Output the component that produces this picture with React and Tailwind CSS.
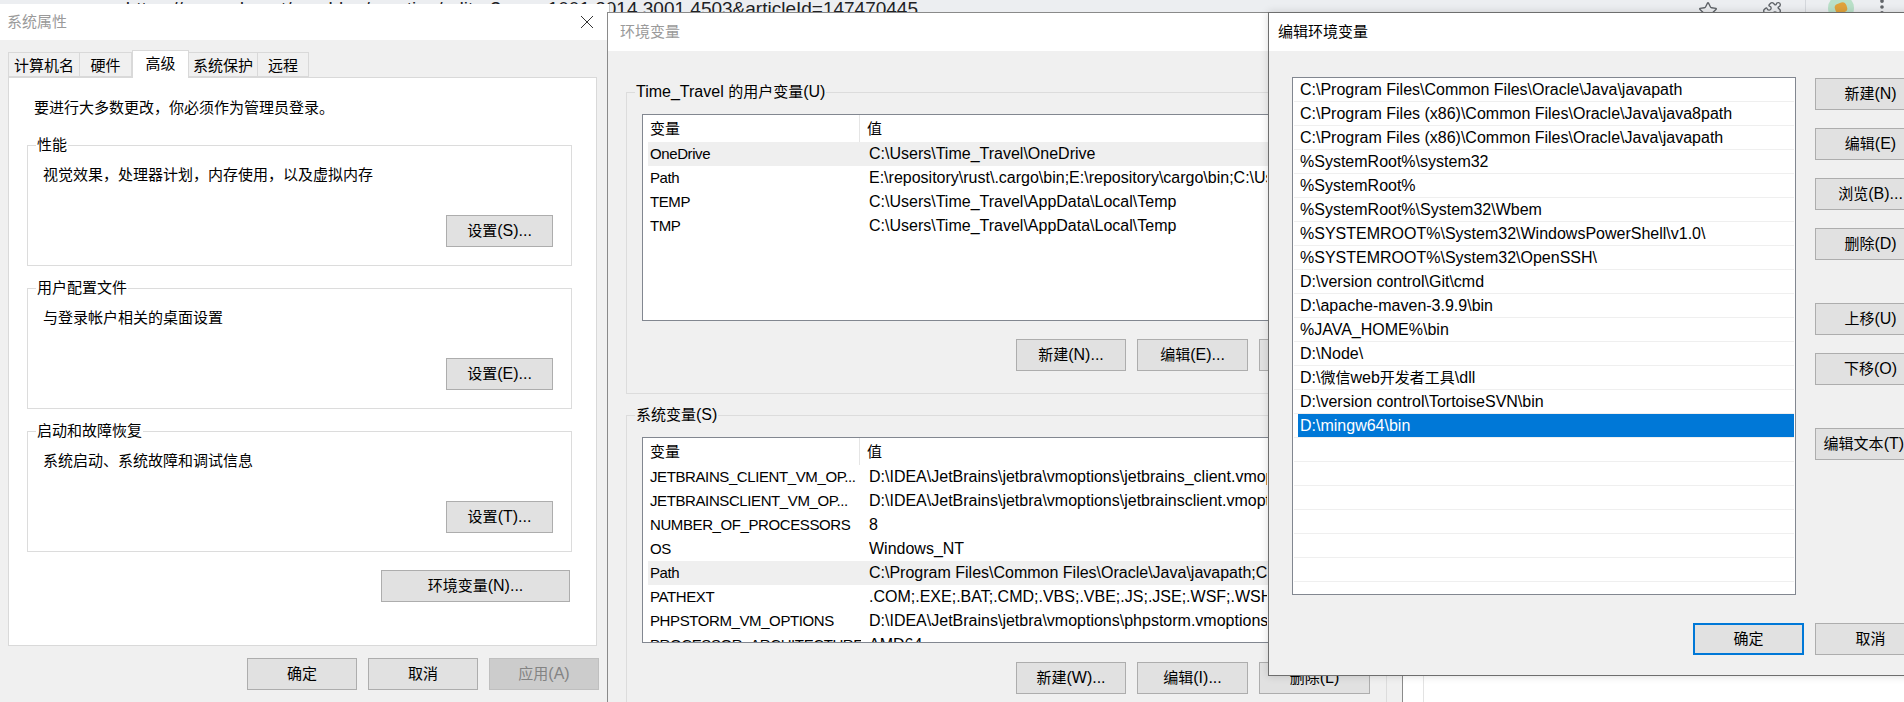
import { Star, Puzzle, EllipsisVertical } from "lucide-react";

const FONT = "font-['Liberation_Sans','Noto_Sans_CJK_SC',sans-serif]";

// YaHei draws latin letters a bit larger than its CJK glyphs, so latin runs get 16px
const CJK = /([\u2E80-\u9FFF\u3000-\u303F\uFF00-\uFFEF]+)/;
const tx = (s) =>
  s.split(CJK).map((part, i) =>
    i % 2 === 1 ? part : part ? <span key={i} className="text-[16px]">{part}</span> : null
  );

const Btn = ({ children, className = "", kind = "normal" }) => {
  const look =
    kind === "disabled"
      ? "border border-[#bfbfbf] bg-[#cccccc] text-[#838383]"
      : kind === "primary"
      ? "border-2 border-[#0078d7] bg-[#e1e1e1] text-black"
      : "border border-[#adadad] bg-[#e1e1e1] text-black";
  return (
    <div className={`shrink-0 flex items-center justify-center text-[15px] leading-[20px] whitespace-nowrap ${look} ${className}`}>
      <span>{tx(children)}</span>
    </div>
  );
};

const CloseX = () => (
  <svg width="14" height="14" viewBox="0 0 14 14" fill="none" stroke="#333" strokeWidth="1">
    <path d="M1 1 L13 13 M13 1 L1 13" />
  </svg>
);

const Group = ({ legend, className = "", children }) => (
  <div className={`relative shrink-0 border border-[#dcdcdc] ${className}`}>
    <span className="absolute -top-[11px] left-[8px] px-[1px] leading-[20px] bg-inherit whitespace-nowrap">{tx(legend)}</span>
    {children}
  </div>
);

const tabs = [
  { label: "计算机名", w: "w-[72px]" },
  { label: "硬件", w: "w-[53px]" },
  { label: "高级", w: "w-[57px]", active: true },
  { label: "系统保护", w: "w-[70px]" },
  { label: "远程", w: "w-[52px]" },
];

const SettingGroup = ({ legend, desc, btn }) => (
  <Group legend={legend} className="h-[121px] bg-white">
    <div className="pl-[15px] pt-[19px] leading-[20px]">{desc}</div>
    <div className="flex justify-end pr-[18px] mt-[30px]">
      <Btn className="w-[107px] h-[32px]">{btn}</Btn>
    </div>
  </Group>
);

const SystemProps = () => (
  <div className="absolute left-0 top-[4px] w-[610px] h-[720px] bg-[#f0f0f0] border-r border-[#c8c8c8] flex flex-col">
    <div className="h-[36px] shrink-0 bg-white flex items-center justify-between pl-[7px] pr-[15px]">
      <span className="text-[#9a9a9a]">系统属性</span>
      <CloseX />
    </div>
    <div className="pl-[8px] pt-[10px] flex flex-col">
      <div className="flex items-end h-[27px]">
        {tabs.map((t) =>
          t.active ? (
            <div
              key={t.label}
              className={`${t.w} h-[28px] -mb-px relative z-10 bg-white border border-b-0 border-[#d9d9d9] flex items-center justify-center pb-[2px]`}
            >
              {t.label}
            </div>
          ) : (
            <div
              key={t.label}
              className={`${t.w} h-[25px] border border-[#d9d9d9] -ml-px first:ml-0 flex items-center justify-center pt-[2px]`}
            >
              {t.label}
            </div>
          )
        )}
      </div>
      <div className="w-[589px] h-[569px] bg-white border border-[#d9d9d9] flex flex-col">
        <div className="pl-[25px] pt-[20px] leading-[20px]">要进行大多数更改，你必须作为管理员登录。</div>
        <div className="ml-[18px] mt-[27px] w-[545px] flex flex-col gap-[22px]">
          <SettingGroup legend="性能" desc="视觉效果，处理器计划，内存使用，以及虚拟内存" btn="设置(S)..." />
          <SettingGroup legend="用户配置文件" desc="与登录帐户相关的桌面设置" btn="设置(E)..." />
          <SettingGroup legend="启动和故障恢复" desc="系统启动、系统故障和调试信息" btn="设置(T)..." />
        </div>
        <div className="flex justify-end pr-[26px] mt-[18px]">
          <Btn className="w-[189px] h-[32px]">环境变量(N)...</Btn>
        </div>
      </div>
    </div>
    <div className="flex justify-end gap-[11px] pr-[10px] mt-[12px]">
      <Btn className="w-[110px] h-[32px]">确定</Btn>
      <Btn className="w-[110px] h-[32px]">取消</Btn>
      <Btn className="w-[110px] h-[32px]" kind="disabled">应用(A)</Btn>
    </div>
  </div>
);

const userVars = [
  ["OneDrive", "C:\\Users\\Time_Travel\\OneDrive", true],
  ["Path", "E:\\repository\\rust\\.cargo\\bin;E:\\repository\\cargo\\bin;C:\\Users\\Time_Travel\\AppData\\Local\\Microsoft\\WindowsApps"],
  ["TEMP", "C:\\Users\\Time_Travel\\AppData\\Local\\Temp"],
  ["TMP", "C:\\Users\\Time_Travel\\AppData\\Local\\Temp"],
];

const sysVars = [
  ["JETBRAINS_CLIENT_VM_OP...", "D:\\IDEA\\JetBrains\\jetbra\\vmoptions\\jetbrains_client.vmoptions"],
  ["JETBRAINSCLIENT_VM_OP...", "D:\\IDEA\\JetBrains\\jetbra\\vmoptions\\jetbrainsclient.vmoptions"],
  ["NUMBER_OF_PROCESSORS", "8"],
  ["OS", "Windows_NT"],
  ["Path", "C:\\Program Files\\Common Files\\Oracle\\Java\\javapath;C:\\Program Files (x86)\\Common Files", true],
  ["PATHEXT", ".COM;.EXE;.BAT;.CMD;.VBS;.VBE;.JS;.JSE;.WSF;.WSH;.MSC"],
  ["PHPSTORM_VM_OPTIONS", "D:\\IDEA\\JetBrains\\jetbra\\vmoptions\\phpstorm.vmoptions"],
  ["PROCESSOR_ARCHITECTURE", "AMD64"],
];

// the value column runs under the edit dialog, so it is cut where that window starts
const VarList = ({ rows, className = "" }) => (
  <div className={`w-[728px] bg-white border border-[#828790] overflow-hidden ${className}`}>
    <div className="flex h-[27px] items-center">
      <div className="w-[217px] h-full pl-[7px] flex items-center border-r border-[#e5e5e5]">变量</div>
      <div className="pl-[7px]">值</div>
    </div>
    {rows.map(([k, v, hl]) => (
      <div key={k} className={`flex h-[24px] items-center whitespace-nowrap ml-[5px] ${hl ? "bg-[#efefef]" : ""}`}>
        <div className="w-[213px] pl-[2px] shrink-0 overflow-hidden text-[15px] tracking-[-0.4px]">{k}</div>
        <div className="ml-[8px] w-[398px] overflow-hidden text-[16px]">{v}</div>
      </div>
    ))}
  </div>
);

const EnvVars = () => (
  <div className="absolute left-[607px] top-[12px] w-[796px] h-[700px] bg-[#f0f0f0] border border-[#8a8a8a] flex flex-col">
    <div className="h-[38px] shrink-0 bg-white flex items-center pl-[12px] text-[#9a9a9a]">环境变量</div>
    <div className="pl-[18px] flex flex-col">
      <Group legend="Time_Travel 的用户变量(U)" className="mt-[41px] w-[761px] h-[302px] bg-[#f0f0f0]">
        <div className="pl-[15px] pt-[21px]">
          <VarList rows={userVars} className="h-[207px]" />
          <div className="w-[728px] flex justify-end gap-[11px] mt-[18px]">
            <Btn className="w-[110px] h-[32px]">新建(N)...</Btn>
            <Btn className="w-[111px] h-[32px]">编辑(E)...</Btn>
            <Btn className="w-[111px] h-[32px]">删除(D)</Btn>
          </div>
        </div>
      </Group>
      <Group legend="系统变量(S)" className="mt-[21px] w-[761px] h-[320px] bg-[#f0f0f0]">
        <div className="pl-[15px] pt-[21px]">
          <VarList rows={sysVars} className="h-[206px]" />
          <div className="w-[728px] flex justify-end gap-[11px] mt-[19px]">
            <Btn className="w-[110px] h-[32px]">新建(W)...</Btn>
            <Btn className="w-[111px] h-[32px]">编辑(I)...</Btn>
            <Btn className="w-[111px] h-[32px]">删除(L)</Btn>
          </div>
        </div>
      </Group>
    </div>
  </div>
);

const pathItems = [
  "C:\\Program Files\\Common Files\\Oracle\\Java\\javapath",
  "C:\\Program Files (x86)\\Common Files\\Oracle\\Java\\java8path",
  "C:\\Program Files (x86)\\Common Files\\Oracle\\Java\\javapath",
  "%SystemRoot%\\system32",
  "%SystemRoot%",
  "%SystemRoot%\\System32\\Wbem",
  "%SYSTEMROOT%\\System32\\WindowsPowerShell\\v1.0\\",
  "%SYSTEMROOT%\\System32\\OpenSSH\\",
  "D:\\version control\\Git\\cmd",
  "D:\\apache-maven-3.9.9\\bin",
  "%JAVA_HOME%\\bin",
  "D:\\Node\\",
  "D:\\微信web开发者工具\\dll",
  "D:\\version control\\TortoiseSVN\\bin",
  "D:\\mingw64\\bin",
  "", "", "", "", "", "", "",
];

const sideButtons = [
  ["新建(N)", "mt-[1px]"],
  ["编辑(E)", "mt-[18px]"],
  ["浏览(B)...", "mt-[18px]"],
  ["删除(D)", "mt-[18px]"],
  ["上移(U)", "mt-[43px]"],
  ["下移(O)", "mt-[18px]"],
  ["编辑文本(T)...", "mt-[43px]"],
];

const EditEnv = () => (
  <div className="absolute left-[1268px] top-[12px] w-[700px] h-[664px] bg-[#f0f0f0] border border-[#6e6e6e] flex flex-col shadow-[0_0_8px_rgba(0,0,0,0.15)]">
    <div className="h-[38px] shrink-0 bg-white flex items-center pl-[9px] text-black">编辑环境变量</div>
    <div className="flex pl-[23px] pt-[26px]">
      <div className="w-[504px] h-[518px] shrink-0 bg-white border border-[#828790] overflow-hidden">
        {pathItems.map((p, i) => (
          <div key={i} className="h-[24px] mx-px border-b border-[#efefef] flex">
            <div
              className={`flex-1 flex items-center whitespace-nowrap ${i === 14 ? "ml-[4px] bg-[#0078d7] text-white pl-[2px]" : "pl-[6px]"}`}
            >
              <span>{tx(p)}</span>
            </div>
          </div>
        ))}
      </div>
      <div className="ml-[19px] flex flex-col">
        {sideButtons.map(([label, mt]) => (
          <Btn key={label} className={`w-[111px] h-[32px] ${mt}`}>{label}</Btn>
        ))}
      </div>
    </div>
    <div className="flex gap-[11px] pl-[424px] mt-[28px]">
      <Btn kind="primary" className="w-[111px] h-[32px]">确定</Btn>
      <Btn className="w-[111px] h-[32px]">取消</Btn>
    </div>
  </div>
);

const BrowserBar = () => (
  <div className="h-[40px] bg-[#eceef1] flex items-start overflow-hidden">
    <div className="w-[918px] shrink-0 flex justify-end overflow-hidden whitespace-nowrap -mt-[2px] text-[19px] leading-[22px] text-[#202124]">
      https://mp.csdn.net/mp_blog/creation/editor?spm=1001.2014.3001.4503&amp;articleId=147470445
    </div>
    <div className="flex-1" />
    <div className="flex items-start text-[#5f6368]">
      <Star size={20} strokeWidth={1.6} className="mt-[1px]" />
      <div className="w-[44px]" />
      <Puzzle size={20} strokeWidth={1.6} className="mt-[1px]" />
      <div className="w-[23px]" />
      <div className="w-px h-[12px] bg-[#d4d7dc]" />
      <div className="w-[22px]" />
      <div className="w-[26px] h-[26px] -mt-[5px] rounded-full bg-[#b9e0c8] flex items-center justify-center">
        <div className="w-[12px] h-[10px] rounded-sm bg-[#e0a23a] rotate-[-20deg]" />
      </div>
      <div className="w-[18px]" />
      <EllipsisVertical size={20} strokeWidth={2.4} className="-mt-[3px]" />
      <div className="w-[12px]" />
    </div>
  </div>
);

export default function App() {
  return (
    <div className={`relative w-[1904px] h-[702px] overflow-hidden bg-white text-[15px] leading-[20px] text-black ${FONT}`}>
      <BrowserBar />
      <div className="flex h-[662px]">
        <div className="w-[1423px] shrink-0" />
        <div className="border-l border-[#e3e3e3]" />
      </div>
      <SystemProps />
      <EnvVars />
      <EditEnv />
    </div>
  );
}
